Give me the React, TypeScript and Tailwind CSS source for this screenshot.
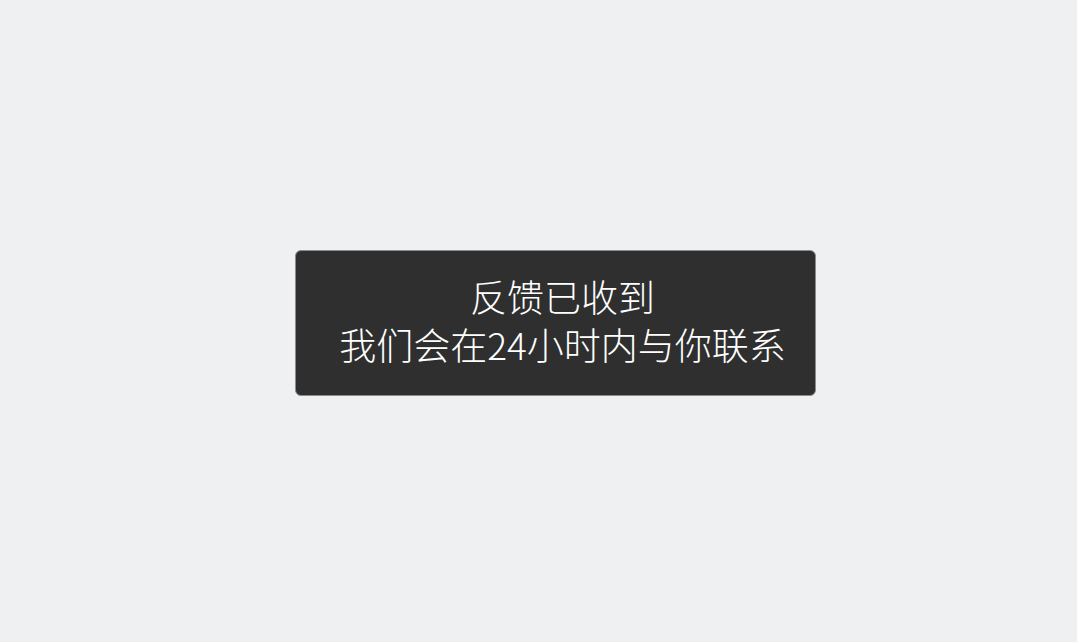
export default function App() {
  return (
    <div className="w-[1077px] h-[642px] bg-[#eff0f2] pt-[250px] pl-[295px]">
      <div className="w-[521px] h-[146px] rounded-[6px] border border-[#8c8c8c] bg-[#2f2f2f] pl-[40px] pr-[26px] pb-[6px] flex flex-col justify-center gap-[4px] text-center text-white text-[37px] leading-[44px] font-light font-['Noto_Sans_CJK_SC','Noto_Sans',sans-serif]">
        <div>反馈已收到</div>
        <div className="whitespace-nowrap">我们会在24小时内与你联系</div>
      </div>
    </div>
  );
}
